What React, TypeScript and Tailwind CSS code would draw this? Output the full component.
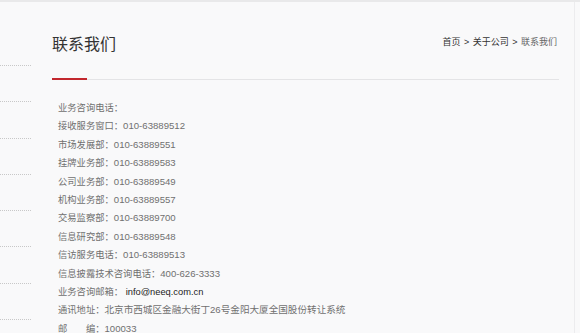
import React from 'react'

const lines: { label: string; value: string; strong?: boolean }[] = [
  { label: '业务咨询电话：', value: '' },
  { label: '接收服务窗口：', value: '010-63889512' },
  { label: '市场发展部：', value: '010-63889551' },
  { label: '挂牌业务部：', value: '010-63889583' },
  { label: '公司业务部：', value: '010-63889549' },
  { label: '机构业务部：', value: '010-63889557' },
  { label: '交易监察部：', value: '010-63889700' },
  { label: '信息研究部：', value: '010-63889548' },
  { label: '信访服务电话：', value: '010-63889513' },
  { label: '信息披露技术咨询电话：', value: '400-626-3333' },
  { label: '业务咨询邮箱：', value: ' info@neeq.com.cn', strong: true },
  { label: '通讯地址：', value: '北京市西城区金融大街丁26号金阳大厦全国股份转让系统' },
  { label: '邮\u3000\u3000编：', value: '100033' }
]

const App: React.FC = () => {
  return (
    <div
      className="w-[580px] h-[333px] overflow-hidden bg-[#f9f9fa]"
      style={{ fontFamily: '"Liberation Sans", "Noto Sans CJK SC", sans-serif' }}
    >
      {/* top strip */}
      <div className="h-[2px] bg-[#e9e9ea]" />

      <div className="flex h-[331px]">
        {/* sidebar remnants */}
        <div className="w-[31px] pt-[27.7px]">
          {Array.from({ length: 8 }).map((_, i) => (
            <div key={i} className="h-[36.3px] border-b border-dotted border-[#c8c8c8]" />
          ))}
        </div>

        {/* main panel */}
        <div className="w-[544px] border-r border-[#ececee] pl-[21px] pr-[15px] pt-[31px]">
          {/* header */}
          <div className="flex justify-between items-start">
            <h1 className="text-[16px] leading-[24px] text-[#333]">联系我们</h1>
            <div className="pt-[2px] pr-[2px] text-[9px] leading-[14px] text-[#333]">
              <span>首页</span>
              <span className="mx-[3.5px]">&gt;</span>
              <span>关于公司</span>
              <span className="mx-[3.5px]">&gt;</span>
              <span className="text-[#666]">联系我们</span>
            </div>
          </div>

          {/* divider */}
          <div className="flex items-end mt-[21px]">
            <div className="w-[35px] h-[2px] bg-[#c2272d]" />
            <div className="flex-1 h-px bg-[#e4e4e6]" />
          </div>

          {/* contact list */}
          <div className="mt-[19px] pl-[6px] text-[9.3px] leading-[18.4px] text-[#707070]">
            {lines.map((l, i) => (
              <div key={i} className="whitespace-pre">
                <span>{l.label}</span>
                <span className={l.strong ? 'text-[#222] font-medium' : 'text-[9.6px]'}>{l.value}</span>
              </div>
            ))}
          </div>
        </div>
      </div>
    </div>
  )
}

export default App
